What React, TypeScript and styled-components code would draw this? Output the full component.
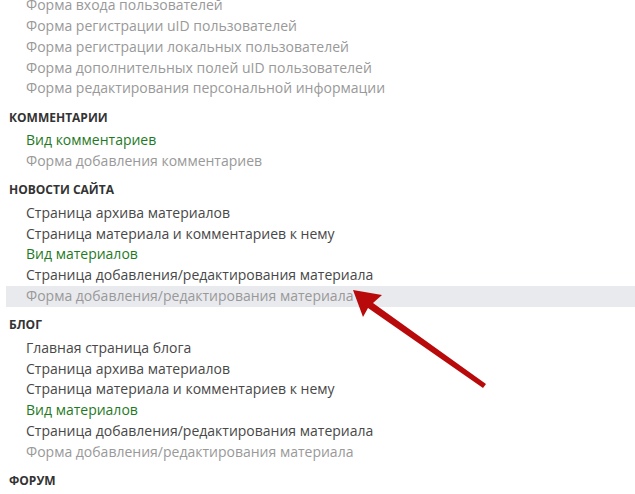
import React from "react";
import styled, { createGlobalStyle } from "styled-components";

const GlobalStyle = createGlobalStyle`
  html, body {
    margin: 0;
    padding: 0;
    background: #fff;
    overflow: hidden;
  }
  body {
    font-family: "Open Sans", "Noto Sans", sans-serif;
  }
`;

const Page = styled.div`
  position: relative;
  width: 635px;
  height: 494px;
  overflow: hidden;
`;

const List = styled.div`
  display: flex;
  flex-direction: column;
  padding-left: 6px;
  margin-top: -4.8px;
`;

const Heading = styled.div`
  margin: 7.5px 0 2.5px;
  padding-left: 3px;
  height: 21px;
  line-height: 21px;
  font-size: 12px;
  font-weight: 700;
  color: #333;
  text-transform: uppercase;
`;

type Tone = "dark" | "gray" | "green";

const toneColors: Record<Tone, string> = {
  dark: "#484848",
  gray: "#999",
  green: "#1f7a1f",
};

const Item = styled.div<{ $tone: Tone; $active?: boolean }>`
  height: 20.8px;
  line-height: 20.8px;
  padding-left: 20px;
  font-size: 14px;
  white-space: nowrap;
  color: ${({ $tone }) => toneColors[$tone]};
  background: ${({ $active }) => ($active ? "#e9eaee" : "transparent")};
`;

const Arrow = styled.svg`
  position: absolute;
  left: 0;
  top: 0;
  pointer-events: none;
`;

type Entry = { text: string; tone: Tone; active?: boolean };
type Section = { title?: string; items: Entry[] };

const sections: Section[] = [
  {
    items: [
      { text: "Форма входа пользователей", tone: "gray" },
      { text: "Форма регистрации uID пользователей", tone: "gray" },
      { text: "Форма регистрации локальных пользователей", tone: "gray" },
      { text: "Форма дополнительных полей uID пользователей", tone: "gray" },
      { text: "Форма редактирования персональной информации", tone: "gray" },
    ],
  },
  {
    title: "Комментарии",
    items: [
      { text: "Вид комментариев", tone: "green" },
      { text: "Форма добавления комментариев", tone: "gray" },
    ],
  },
  {
    title: "Новости сайта",
    items: [
      { text: "Страница архива материалов", tone: "dark" },
      { text: "Страница материала и комментариев к нему", tone: "dark" },
      { text: "Вид материалов", tone: "green" },
      { text: "Страница добавления/редактирования материала", tone: "dark" },
      { text: "Форма добавления/редактирования материала", tone: "gray", active: true },
    ],
  },
  {
    title: "Блог",
    items: [
      { text: "Главная страница блога", tone: "dark" },
      { text: "Страница архива материалов", tone: "dark" },
      { text: "Страница материала и комментариев к нему", tone: "dark" },
      { text: "Вид материалов", tone: "green" },
      { text: "Страница добавления/редактирования материала", tone: "dark" },
      { text: "Форма добавления/редактирования материала", tone: "gray" },
    ],
  },
  {
    title: "Форум",
    items: [],
  },
];

export default function App() {
  return (
    <Page>
      <GlobalStyle />
      <List>
        {sections.map((s, i) => (
          <React.Fragment key={i}>
            {s.title && <Heading>{s.title}</Heading>}
            {s.items.map((it, j) => (
              <Item key={j} $tone={it.tone} $active={it.active}>
                {it.text}
              </Item>
            ))}
          </React.Fragment>
        ))}
      </List>
      <Arrow width="635" height="494" viewBox="0 0 635 494">
        <polygon
          points="353,290 382,295 373,303 486,384 483,388 368,308 363,317"
          fill="#b80a0a"
        />
      </Arrow>
    </Page>
  );
}
